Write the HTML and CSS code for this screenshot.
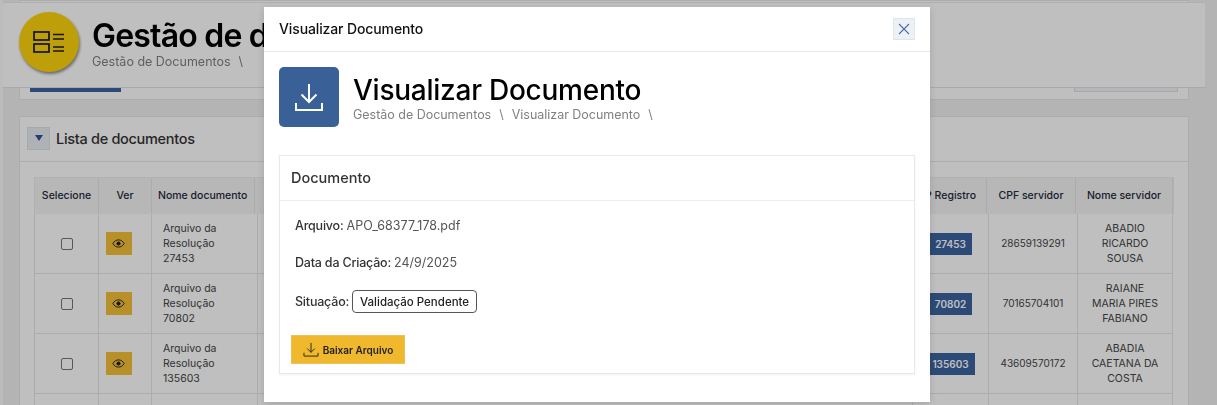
FILE: index.html
```html
<!DOCTYPE html>
<html lang="pt-BR">
<head>
<meta charset="utf-8">
<title>Visualizar Documento</title>
<link rel="stylesheet" href="styles.css">
</head>
<body>
<div class="app">
  <div class="rail"></div>
  <main class="page">
    <header class="page-header">
      <div class="round-icon">
        <svg width="32" height="24" viewBox="0 0 32 24" fill="none" stroke="#1a1a1a" stroke-width="1.700">
          <rect x="1" y="2" width="15" height="8"/><rect x="1" y="14" width="15" height="8"/>
          <path d="M20 4.500h11M20 9h11M20 17h11M20 21h11"/>
        </svg>
      </div>
      <div class="heading">
        <h1 class="page-title">Gestão de documentos</h1>
        <div class="crumbs"><span>Gestão de Documentos</span><span class="sep">\</span></div>
      </div>
    </header>
    <section class="card filter-card">
      <button class="fill-btn"></button>
      <button class="ghost-btn"></button>
    </section>
    <section class="card list-card">
      <div class="list-head">
        <button class="toggle"><span class="tri"></span></button>
        <h2 class="list-title">Lista de documentos</h2>
      </div>
      <div class="table-wrap">
        <div class="thead">
          <div>Selecione</div><div>Ver</div><div class="left">Nome documento</div><div></div><div>CEP Registro</div><div>CPF servidor</div><div>Nome servidor</div>
        </div>
        <div class="row">
          <div><span class="check"></span></div>
          <div><button class="eye"><svg width="13" height="9" viewBox="0 0 14 10" fill="none" stroke="#1a1a1a" stroke-width="1"><path d="M.7 5C2.3 2.3 4.5 1 7 1s4.7 1.3 6.3 4C11.7 7.7 9.500 9 7 9S2.300 7.700.7 5z"/><circle cx="7" cy="5" r="1.800" fill="#1a1a1a"/></svg></button></div>
          <div class="left">Arquivo da Resolução 27453</div><div></div>
          <div><span class="badge">27453</span></div><div>28659139291</div><div>ABADIO RICARDO SOUSA</div>
        </div>
        <div class="row">
          <div><span class="check"></span></div>
          <div><button class="eye"><svg width="13" height="9" viewBox="0 0 14 10" fill="none" stroke="#1a1a1a" stroke-width="1"><path d="M.7 5C2.3 2.3 4.5 1 7 1s4.7 1.3 6.3 4C11.7 7.7 9.500 9 7 9S2.300 7.700.7 5z"/><circle cx="7" cy="5" r="1.800" fill="#1a1a1a"/></svg></button></div>
          <div class="left">Arquivo da Resolução 70802</div><div></div>
          <div><span class="badge">70802</span></div><div>70165704101</div><div>RAIANE MARIA PIRES FABIANO</div>
        </div>
        <div class="row">
          <div><span class="check"></span></div>
          <div><button class="eye"><svg width="13" height="9" viewBox="0 0 14 10" fill="none" stroke="#1a1a1a" stroke-width="1"><path d="M.7 5C2.3 2.3 4.5 1 7 1s4.7 1.3 6.3 4C11.7 7.7 9.500 9 7 9S2.300 7.700.7 5z"/><circle cx="7" cy="5" r="1.800" fill="#1a1a1a"/></svg></button></div>
          <div class="left">Arquivo da Resolução 135603</div><div></div>
          <div><span class="badge">135603</span></div><div>43609570172</div><div>ABADIA CAETANA DA COSTA</div>
        </div>
        <div class="row"><div></div><div></div><div></div><div></div><div></div><div></div><div></div></div>
      </div>
    </section>
  </main>
</div>

<div class="backdrop"></div>
<div class="modal" role="dialog">
  <div class="modal-head">
    <div class="modal-name">Visualizar Documento</div>
    <button class="close" aria-label="Fechar">
      <svg width="12" height="12" viewBox="0 0 12 12" stroke="#4a6fa5" stroke-width="1.100" fill="none"><path d="M1 1l10 10M11 1L1 11"/></svg>
    </button>
  </div>
  <div class="modal-body">
    <div class="doc-title">
      <div class="square-icon">
        <svg width="30" height="30" viewBox="0 0 30 30" fill="none" stroke="#fff" stroke-width="2">
          <path d="M15 2v18M7.500 12.500 15 20l7.500-7.500M2 21v7h26v-7"/>
        </svg>
      </div>
      <div>
        <h1 class="doc-heading">Visualizar Documento</h1>
        <div class="crumbs"><span>Gestão de Documentos</span><span class="sep">\</span><span>Visualizar Documento</span><span class="sep">\</span></div>
      </div>
    </div>
    <section class="doc-card">
      <h3 class="doc-card-head">Documento</h3>
      <div class="doc-card-body">
        <p class="line one"><b>Arquivo:</b> APO_68377_178.pdf</p>
        <p class="line two"><b>Data da Criação:</b> 24/9/2025</p>
        <div class="line status"><b>Situação:</b><span class="pill">Validação Pendente</span></div>
        <button class="download">
          <svg width="16" height="15" viewBox="0 0 17 16" fill="none" stroke="#222" stroke-width="1"><path d="M8.500 1v10M4.500 7l4 4 4-4M1 11.500V15h15v-3.500"/></svg>
          Baixar Arquivo
        </button>
      </div>
    </section>
  </div>
</div>
</body>
</html>
```
FILE: styles.css
```css
* { box-sizing: border-box; }
html, body { margin: 0; height: 100%; overflow: hidden; }
body { font-family: Inter, "Liberation Sans", sans-serif; color: #333; background: #f1f1f1; }
h1, h2, h3, p { margin: 0; font-weight: 400; }
button { font-family: inherit; padding: 0; border: 0; }

.app { display: flex; height: 405px; overflow: hidden; filter: blur(.35px); }
.rail { width: 3px; background: #fbfbfb; flex: none; }
.page { position: relative; flex: 1; padding: 0 28px 0 16px; }

.page-header {
  position: absolute; top: 2px; left: 0; right: 12px; height: 86px; z-index: 2;
  display: flex; align-items: center; gap: 13px; padding: 0 0 6px 16px;
  background: #fff; border-top: 1px solid #eaeaea; border-bottom: 1px solid #e3e3e3;
}
.round-icon {
  width: 60px; height: 60px; border-radius: 50%; background: #ffd50c; flex: none;
  display: flex; align-items: center; justify-content: center;
  box-shadow: 1px 2px 3px rgba(0,0,0,.45);
}
.page-title { font-size: 32px; line-height: 36px; font-weight: 600; color: #000; letter-spacing: -.8px; white-space: nowrap; margin-top: 3px; }
.crumbs { display: flex; gap: 8px; font-size: 12.5px; line-height: 16px; color: #808080; white-space: nowrap; }

.card { background: #fff; border: 1px solid #e6e6e6; }
.filter-card { height: 100px; display: flex; justify-content: space-between; align-items: flex-end; padding: 0 10px 7px 10px; }
.fill-btn { width: 91px; height: 20px; background: #3b639f; }
.ghost-btn { width: 104px; height: 20px; background: #f0f3f7; border: 1px solid #dce1e8; }

.list-card { margin-top: 16px; height: 320px; }
.list-head { height: 45px; display: flex; align-items: center; gap: 6px; padding: 0 7px 2px; border-bottom: 1px solid #e6e6e6; }
.toggle { width: 23px; height: 23px; background: #e9eef5; border: 1px solid #dde3ea; display: flex; align-items: center; justify-content: center; }
.tri { width: 0; height: 0; border-left: 4px solid transparent; border-right: 4px solid transparent; border-top: 6px solid #2f5597; }
.list-title { font-size: 14.500px; font-weight: 500; color: #333; letter-spacing: -.3px; }

.table-wrap { padding: 15px 14px 0; }
.thead, .row { display: grid; text-align: center; font-size: 10.500px; }
.thead { grid-template-columns: 64px 53px 103px 646px 86px 89px 97px; height: 37px; padding-bottom: 1px; background: #f5f5f5; border: 1px solid #ececec; border-bottom: 0; font-weight: 500; color: #1e2a3c; width: 1140px; }
.row { grid-template-columns: 64px 53px 106px 655px 76px 89px 95px; height: 60px; border-bottom: 1px solid #e6e6e6; border-left: 1px solid #e6e6e6; color: #444; line-height: 15px; width: 1139px; }
.thead > div, .row > div { display: flex; align-items: center; justify-content: center; padding: 0 12px; border-right: 1px solid #e6e6e6; }
.thead > div { line-height: 14px; padding: 0 6px; }
.thead > .left { justify-content: flex-start; text-align: left; padding-left: 6px; }
.row > .left { justify-content: flex-start; text-align: left; padding: 0 11px; }
.row > div:nth-child(2) { padding: 0 13px 0 0; }
.row > div:nth-child(5) { padding: 0; }
.row > div:nth-child(6) { font-size: 10px; }
.check { width: 12px; height: 12px; border: 1px solid #767676; border-radius: 2px; background: #fff; }
.eye { width: 26px; height: 23px; background: #f5c038; display: flex; align-items: center; justify-content: center; }
.badge { background: #3b639f; color: #fff; font-weight: 600; padding: 0 6px; height: 22px; line-height: 22px; font-size: 10px; flex: none; }

.backdrop { position: fixed; inset: 0; background: rgba(0,0,0,.25); z-index: 5; }

.modal { position: fixed; left: 264px; top: 7px; width: 666px; height: 395px; background: #fff; z-index: 6; box-shadow: 0 2px 8px rgba(0,0,0,.15); filter: blur(.3px); }
.modal-head { height: 45px; display: flex; justify-content: space-between; align-items: center; padding: 0 15px 1px; border-bottom: 1px solid #e9e9e9; }
.modal-name { font-size: 14px; font-weight: 500; color: #111; letter-spacing: -.12px; }
.close { width: 22px; height: 22px; background: #edf1f6; border: 1px solid #dfe5ec; display: flex; align-items: center; justify-content: center; }
.modal-body { padding: 15px; }
.doc-title { display: flex; align-items: center; gap: 14px; height: 60px; }
.square-icon { width: 60px; height: 60px; background: #3a6098; border-radius: 5px; display: flex; align-items: center; justify-content: center; flex: none; }
.doc-heading { font-size: 28px; line-height: 34px; font-weight: 500; color: #000; letter-spacing: -.25px; margin-top: 2px; }
.modal .crumbs { margin-top: 0; letter-spacing: -.02px; }
.doc-card { margin-top: 28px; height: 219px; border: 1px solid #e9e9e9; box-shadow: 0 1px 2px rgba(0,0,0,.06); }
.doc-card-head { height: 45px; padding: 0 11px 1px; display: flex; align-items: center; font-size: 14.500px; font-weight: 500; color: #333; border-bottom: 1px solid #ededed; }
.doc-card-body { padding: 0 11px; font-size: 12.500px; color: #555; }
.doc-card-body b { font-weight: 500; color: #333; letter-spacing: -.2px; }
.line { display: flex; align-items: center; gap: 3px; padding-left: 4px; }
.one { margin-top: 15px; height: 18px; }
.two { margin-top: 19px; height: 18px; }
.status { margin-top: 19px; height: 23px; }
.pill { width: 125px; height: 23px; border: 1px solid #555; border-radius: 4px; color: #222; display: flex; align-items: center; justify-content: center; font-size: 11.500px; font-weight: 500; background: #fff; }
.download { margin-top: 22px; width: 114px; height: 29px; background: #f0b82d; border: 1px solid #ecc05a; display: flex; align-items: center; justify-content: center; gap: 4px; font-size: 10px; font-weight: 600; color: #222; }
```
